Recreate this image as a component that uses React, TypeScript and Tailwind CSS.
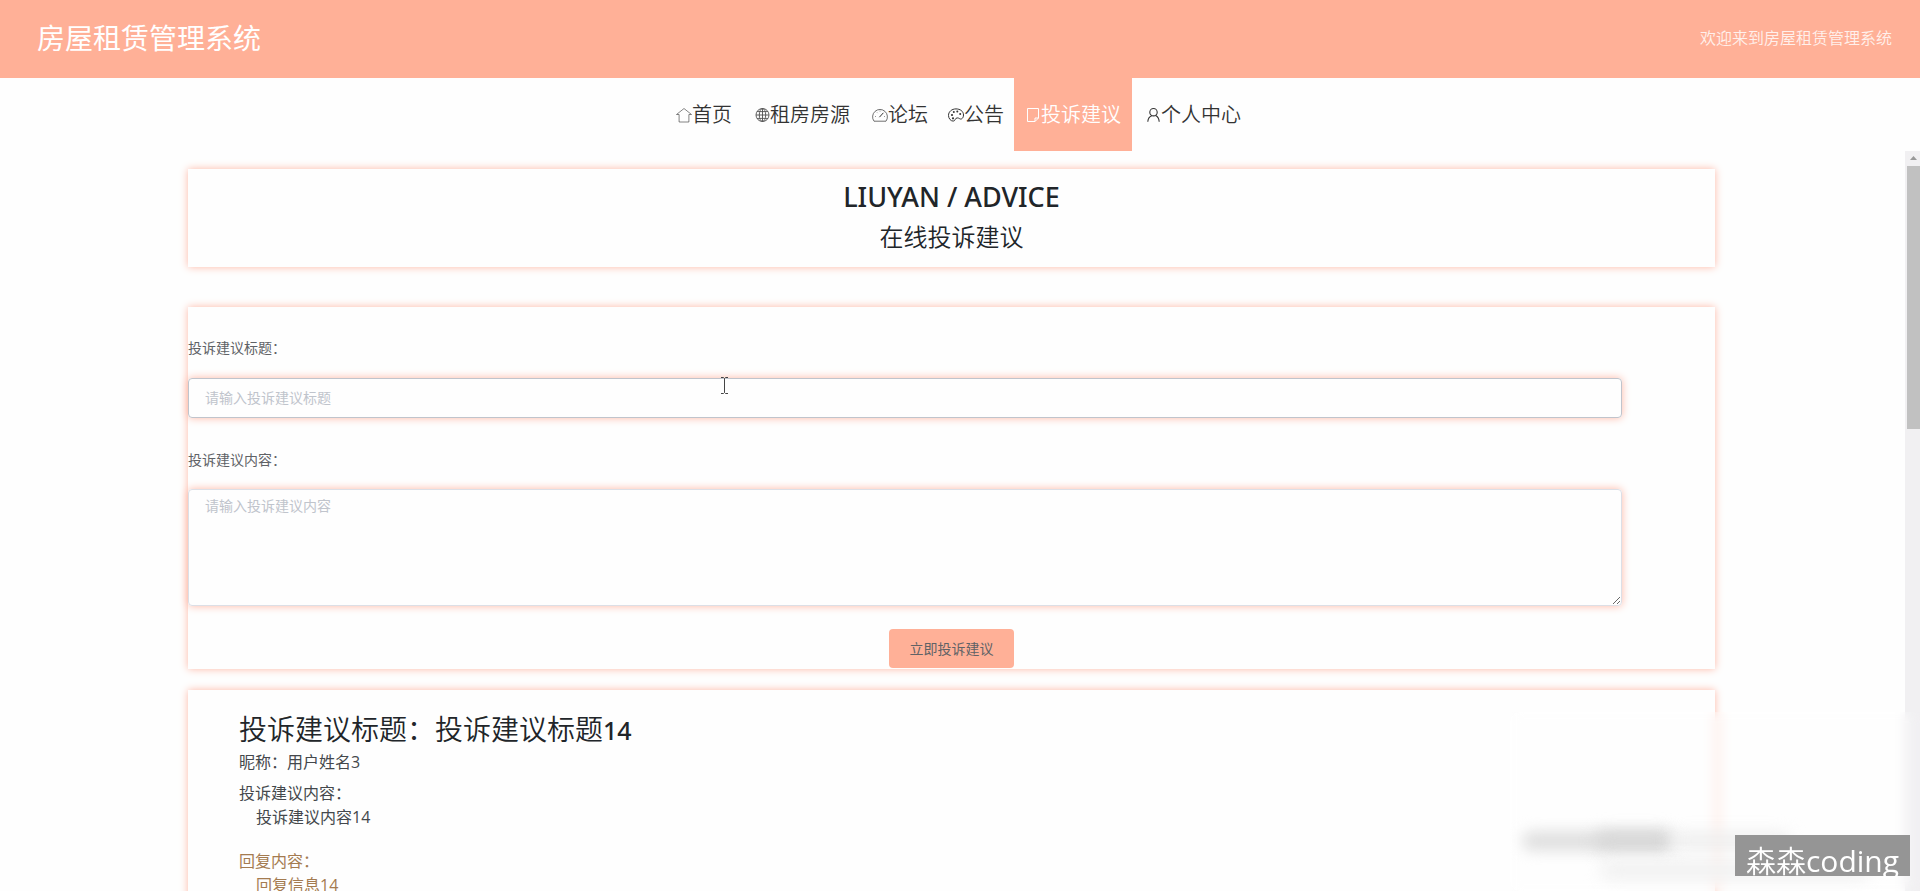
import React from "react";

const outline = "h-4 w-4 shrink-0 overflow-visible fill-none stroke-current";

function HomeIcon() {
  return (
    <svg viewBox="0 0 16 16" className={outline} strokeWidth="1" aria-hidden="true">
      <path d="M0.5 7.5 8 1.5l7.500 6h-2.600V15H3.100V7.500z" strokeLinejoin="round" opacity=".6" />
    </svg>
  );
}

function GlobeIcon() {
  return (
    <svg viewBox="0 0 16 16" className={outline} strokeWidth=".9" aria-hidden="true">
      <g opacity=".85">
        <circle cx="8.5" cy="8" r="6.5" />
        <ellipse cx="8.5" cy="8" rx="3.200" ry="6.500" />
        <path d="M8.500 1.500v13M2 8h13M3 4.600h11M3 11.400h11" />
      </g>
    </svg>
  );
}

function GaugeIcon() {
  return (
    <svg viewBox="0 0 16 16" className={outline} strokeWidth="1" aria-hidden="true">
      <path d="M2 14.200A7.400 7.400 0 1 1 14 14.200z" strokeLinejoin="round" opacity=".7" />
      <path d="M7.400 10.200 11.400 5.800" />
      <path d="M3 9.500h1M5 5.400l.7.700M8 3.600v1M12 9.500h1" opacity=".5" />
    </svg>
  );
}

function PaletteIcon() {
  return (
    <svg viewBox="0 0 16 16" className={outline} strokeWidth="1" aria-hidden="true">
      <path d="M8 1.900C3.800 1.900.5 4.700.5 8.400c0 3.200 2.300 5.700 4.700 5.700 2.300 0 1.600-3.100 4-3.200 2.100-.1 2.700 1.700 4.300 1 1.300-.6 2-2.200 2-3.900C15.500 4.300 12.200 1.900 8 1.900z" />
      <g className="fill-current stroke-none">
        <circle cx="4" cy="8" r="1.100" />
        <circle cx="5" cy="11.300" r="1.100" />
        <circle cx="5.800" cy="5" r="1" />
        <circle cx="9.300" cy="4.500" r="1" />
        <circle cx="12.200" cy="6.900" r="1" />
      </g>
    </svg>
  );
}

function NoteIcon() {
  return (
    <svg viewBox="0 0 16 16" className={outline} strokeWidth="1" aria-hidden="true">
      <path d="M2.500 1.500h11v9.500l-3.500 3.500h-7.500zM13.500 11H10v3.500" strokeLinejoin="round" />
    </svg>
  );
}

function UserIcon() {
  return (
    <svg viewBox="0 0 16 16" className={outline} strokeWidth="1.100" aria-hidden="true">
      <circle cx="8.500" cy="5.200" r="3.700" />
      <path d="M2.800 14.800c.2-3.300 1.800-5.300 4-6M10.700 8.600c2 1 3.300 3.200 3.500 6.200" />
    </svg>
  );
}

const navItems = [
  { label: "首页", icon: <HomeIcon />, width: "w-[76px]" },
  { label: "租房房源", icon: <GlobeIcon />, width: "w-[120px]" },
  { label: "论坛", icon: <GaugeIcon />, width: "w-[76px]" },
  { label: "公告", icon: <PaletteIcon />, width: "w-[76px]" },
  { label: "投诉建议", icon: <NoteIcon />, width: "w-[118px]", active: true },
  { label: "个人中心", icon: <UserIcon />, width: "w-[122px]" },
];

const glow = "shadow-[0_0_8px_#ffb8a6]";

export default function App() {
  return (
    <div className="relative flex h-screen flex-col overflow-hidden bg-[#fefefe] font-['Open_Sans','Noto_Sans_CJK_SC',sans-serif] text-[#212529]">
      <header className="flex h-[78px] shrink-0 items-center justify-between bg-[#ffb097] pr-7 pb-0.5 pl-[37px] text-white">
        <h1 className="text-[28px] leading-10">房屋租赁管理系统</h1>
        <p className="text-base font-[350] text-[#fff0ec]">欢迎来到房屋租赁管理系统</p>
      </header>

      <nav className="flex h-[73px] shrink-0 justify-center text-xl font-[350] text-[#333]">
        {navItems.map((item) => (
          <a
            key={item.label}
            href="#"
            className={`flex items-center justify-center whitespace-nowrap ${item.width} ${item.active ? "bg-[#ffb097] text-white" : ""}`}
          >
            {item.icon}
            {item.label}
          </a>
        ))}
      </nav>

      <div className="flex min-h-0 flex-1">
        <main className="min-w-0 flex-1 overflow-hidden pt-[18px] pr-[190px] pl-[188px]">
          <section className={`mb-10 flex h-[98px] flex-col items-center pt-2 ${glow}`}>
            <h2 className="font-['Noto_Sans','Open_Sans',sans-serif] text-[27px] leading-10 font-medium">LIUYAN / ADVICE</h2>
            <p className="text-2xl leading-10 font-[350]">在线投诉建议</p>
          </section>

          <form className={`mb-[21px] flex h-[362px] flex-col pt-[29px] text-sm text-[#606266] ${glow}`}>
            <label htmlFor="title" className="leading-6">投诉建议标题：</label>
            <input
              id="title"
              placeholder="请输入投诉建议标题"
              className={`mt-[18px] mr-[93px] h-10 rounded-sm border border-[#c0c4cc] px-4 pb-0.5 placeholder:text-[#c0c4cc] ${glow}`}
            />
            <label htmlFor="content" className="mt-[30px] leading-6">投诉建议内容：</label>
            <textarea
              id="content"
              placeholder="请输入投诉建议内容"
              className={`mt-[17px] mr-[93px] h-[117px] resize-y rounded-sm border border-[#dcdfe6] px-4 py-1.5 placeholder:text-[#c0c4cc] ${glow}`}
            />
            <button type="submit" className="mt-[23px] h-[39px] w-[125px] self-center rounded-sm bg-[#ffb097]">
              立即投诉建议
            </button>
          </form>

          <article className={`h-[400px] px-[51px] pt-5 ${glow}`}>
            <h2 className="text-[28px] leading-[38px] font-[350]">
              投诉建议标题：投诉建议标题
              <span className="font-['Noto_Sans','Open_Sans',sans-serif] text-[25px] font-medium">14</span>
            </h2>
            <div className="text-[#44484c]">
              <p className="leading-[27px]">昵称：用户姓名3</p>
              <p className="mt-1 leading-[27px]">投诉建议内容：</p>
              <p className="pl-[17px] leading-5">投诉建议内容14</p>
            </div>
            <div className="mt-5 text-[#a47b50]">
              <p className="leading-7">回复内容：</p>
              <p className="pl-[17px] leading-5">回复信息14</p>
            </div>
          </article>
        </main>

        <div className="flex w-[15px] shrink-0 flex-col bg-[#f1f0f2]" aria-hidden="true">
          <svg viewBox="0 0 15 15" className="h-[15px] w-[15px] fill-[#999]">
            <path d="M5 9h7L8.500 5z" />
          </svg>
          <div className="ml-0.5 h-[263px] bg-[#c1c1c1]" />
        </div>
      </div>

      <div className="absolute right-0 bottom-0 h-[179px] w-[410px] overflow-hidden backdrop-blur-[6px]" aria-hidden="true">
        <div className="absolute top-[119px] left-[12px] h-5 w-[150px] rounded-full bg-[#e0e0e0] blur-[7px]" />
        <div className="absolute top-[119px] left-[84px] h-5 w-[80px] rounded-full bg-[#d8d8d8] blur-[8px]" />
        <div className="absolute top-[121px] left-[160px] h-4 w-[120px] rounded-full bg-[#ededed] blur-[8px]" />
        <div className="absolute top-[148px] left-[90px] h-5 w-[270px] rounded-full bg-[#f1f1f1] blur-[8px]" />
      </div>
      <div className="absolute right-[10px] bottom-[15px] flex h-[41px] w-[175px] items-center justify-center bg-[#959595] pt-2.5 text-[30px] leading-none font-[350] text-white">
        森森<span className="font-normal">coding</span>
      </div>

      <svg viewBox="0 0 9 17" className="absolute top-[377px] left-[720px] h-[17px] w-[9px] fill-none stroke-[#444]" aria-hidden="true">
        <path d="M1 .5h2.500l1 1 1-1H8M4.500 1.500v14M1 16.500h2.500l1-1 1 1H8" />
      </svg>
    </div>
  );
}
